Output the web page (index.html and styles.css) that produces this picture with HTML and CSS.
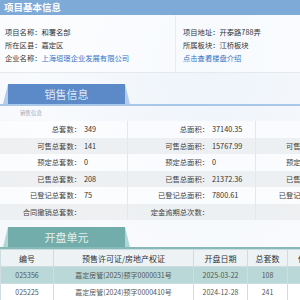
FILE: index.html
```html
<!DOCTYPE html>
<html lang="zh">
<head>
<meta charset="utf-8">
<link rel="stylesheet" href="styles.css">
</head>
<body>
<div class="topbar">项目基本信息</div>
<div class="info">
  <div class="info-col left">
    <div class="info-row">项目名称：和署名部</div>
    <div class="info-row">所在区县：嘉定区</div>
    <div class="info-row">企业名称：<span class="link">上海垣璟企业发展有限公司</span></div>
  </div>
  <div class="info-col right">
    <div class="info-row">项目地址：开泰路788弄</div>
    <div class="info-row">所属板块：江桥板块</div>
    <div class="info-row"><span class="link">点击查看楼盘介绍</span></div>
  </div>
</div>

<div class="tabbar blue">
  <div class="tab"><div class="tab-inner">销售信息</div></div>
</div>
<div class="caption">销售信息</div>
<table class="sales">
  <tr><td class="l">总套数：</td><td class="v">349</td><td class="l">总面积：</td><td class="v">37140.35</td><td class="l"></td><td class="v"></td></tr>
  <tr class="alt"><td class="l">可售总套数：</td><td class="v">141</td><td class="l">可售总面积：</td><td class="v">15767.99</td><td class="l">可售住宅套数：</td><td class="v"></td></tr>
  <tr><td class="l">预定总套数：</td><td class="v">0</td><td class="l">预定总面积：</td><td class="v">0</td><td class="l">预定住宅套数：</td><td class="v"></td></tr>
  <tr class="alt"><td class="l">已售总套数：</td><td class="v">208</td><td class="l">已售总面积：</td><td class="v">21372.36</td><td class="l">已售住宅套数：</td><td class="v"></td></tr>
  <tr><td class="l">已登记总套数：</td><td class="v">75</td><td class="l">已登记总面积：</td><td class="v">7800.61</td><td class="l">已登记住宅套数：</td><td class="v"></td></tr>
  <tr class="alt"><td class="l">合同撤销总套数：</td><td class="v"></td><td class="l">定金逾期总次数：</td><td class="v"></td><td class="l"></td><td class="v"></td></tr>
</table>

<div class="tabbar teal">
  <div class="tab"><div class="tab-inner">开盘单元</div></div>
</div>
<table class="units">
  <colgroup><col class="c1"><col class="c2"><col class="c3"><col class="c4"><col class="c5"></colgroup>
  <tr class="head"><th>编号</th><th>预售许可证/房地产权证</th><th>开盘日期</th><th>总套数</th><th>住宅套数</th></tr>
  <tr class="hl"><td>025356</td><td>嘉定房管(2025)预字0000031号</td><td>2025-03-22</td><td>108</td><td></td></tr>
  <tr><td>025225</td><td>嘉定房管(2024)预字0000410号</td><td>2024-12-28</td><td>241</td><td></td></tr>
</table>
</body>
</html>
```

FILE: styles.css
```css
html, body {
  margin: 0;
  padding: 0;
}
body {
  width: 300px;
  height: 300px;
  overflow: hidden;
  font-family: "Noto Sans CJK SC", "Noto Sans", sans-serif;
  color: #333;
  background: radial-gradient(ellipse at 70% 20%, #eef4fb 0%, #f8fafd 60%, #f4f7fb 100%);
}
.topbar {
  height: 15px;
  line-height: 15px;
  background: #7eaad8;
  color: #fff;
  font-size: 9.5px;
  font-weight: bold;
  padding-left: 4px;
}
.info {
  display: flex;
  height: 57px;
  border-bottom: 1px solid #e4e9ef;
  background: rgba(255,255,255,0.5);
}
.info-col {
  padding-top: 11px;
  font-size: 7.3px;
  color: #333;
}
.info-col.left {
  width: 170px;
  padding-left: 5px;
}
.info-col.right {
  border-left: 1px solid #e6ecf2;
  padding-left: 7px;
  flex: 1;
}
.info-row {
  height: 13px;
  line-height: 13px;
}
.link {
  color: #3574c4;
}
.tabbar {
  margin-top: 11px;
  height: 20px;
  padding-left: 3px;
}
.tabbar.blue { border-bottom: 2px solid #a9c7e9; }
.tabbar.teal { margin-top: 7px; border-bottom: 2px solid #86bab8; }
.tab {
  width: 127px;
  height: 20px;
  clip-path: polygon(5px 0, 122px 0, 100% 100%, 0 100%);
}
.blue .tab { background: #b3cced; }
.teal .tab { background: #b3d6d5; }
.tab-inner {
  margin: 0 5px;
  height: 20px;
  line-height: 20px;
  text-align: center;
  font-size: 11px;
}
.blue .tab-inner { background: #5c89c8; color: #dde8f6; }
.teal .tab-inner { background: #72adab; color: #e2f0ef; }
.caption {
  height: 15px;
  line-height: 15px;
  font-size: 5.5px;
  color: #9aa4ae;
  padding-left: 20px;
}
table {
  border-collapse: collapse;
  table-layout: fixed;
}
.sales {
  width: 383px;
  font-size: 7.3px;
}
.sales td {
  height: 16.5px;
  padding: 0;
  white-space: nowrap;
}
.sales td.l {
  width: 81px;
  text-align: right;
  color: #444;
}
.sales td.v {
  width: 43px;
  padding-left: 3px;
  border-right: 1px solid #e4e8ee;
  color: #333;
}
.sales tr { background: rgba(255,255,255,0.55); }
.sales tr.alt { background: rgba(236,238,241,0.9); }
.units {
  width: 340px;
}
.units col.c1 { width: 53px; }
.units col.c2 { width: 140px; }
.units col.c3 { width: 54px; }
.units col.c4 { width: 40px; }
.units col.c5 { width: 53px; }
.units th, .units td {
  border: 1px solid #cfdde3;
  text-align: center;
  padding: 0;
  white-space: nowrap;
  overflow: hidden;
}
.units th {
  height: 16px;
  font-size: 8px;
  font-weight: normal;
  color: #333;
  background: #edf2f5;
}
.units td {
  height: 16px;
  font-size: 7px;
  color: #555;
  background: #fff;
}
.units tr.hl td {
  background: #b9d8d7;
}
```
